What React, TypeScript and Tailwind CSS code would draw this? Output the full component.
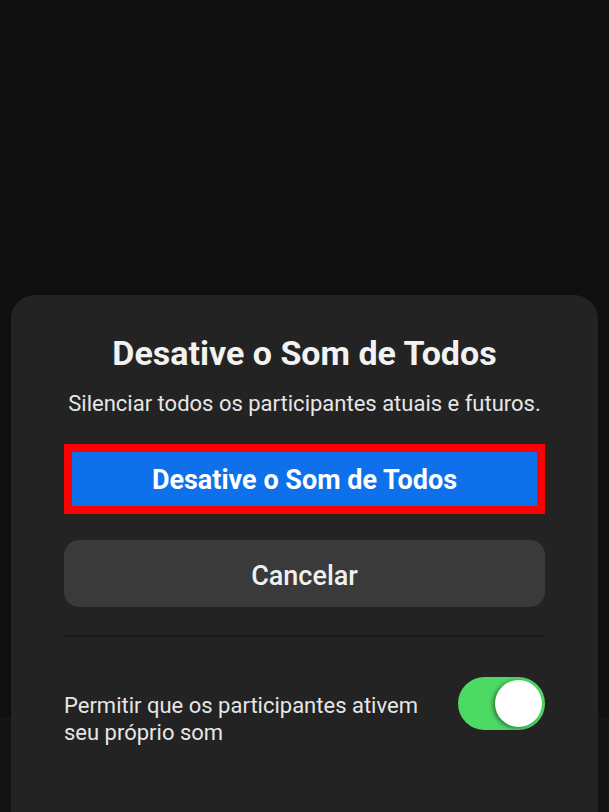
import React from "react";

function Toggle({ on }: { on: boolean }) {
  return (
    <div
      className={`relative h-[53px] w-[87px] shrink-0 rounded-full ${on ? "bg-[#4cd964]" : "bg-[#555]"}`}
    >
      <div className="absolute right-[3px] top-[3px] h-[47px] w-[47px] rounded-full bg-white shadow-[-2px_1px_4px_rgba(0,0,0,0.45)]" />
    </div>
  );
}

export default function App() {
  return (
    <div className="relative h-[812px] w-full overflow-hidden bg-[#0f0f0f] font-['Roboto',sans-serif]">
      {/* dimmed app behind the sheet */}
      <div className="flex h-full flex-col">
        <div className="flex-1" />
        <div className="h-[95px] bg-[#141414]" />
      </div>

      <div className="absolute inset-x-[11px] bottom-0 top-[295px] rounded-t-[24px] bg-[#232323] px-[53px] pt-[40px]">
        <h1 className="text-center text-[34px] font-bold leading-[36px] text-[#f2f2f2]">
          Desative o Som de Todos
        </h1>
        <p className="mt-[19px] text-center text-[22px] leading-[28px] text-[#e6e6e6]">
          Silenciar todos os participantes atuais e futuros.
        </p>

        <div className="mt-[26px] border-[8px] border-[#ff0000]">
          <button className="flex h-[54px] w-full items-center justify-center bg-[#0e71eb] pt-[2px] text-[27px] font-bold text-white">
            Desative o Som de Todos
          </button>
        </div>

        <button className="mt-[26px] flex h-[67px] w-full items-center justify-center rounded-[15px] bg-[#3a3a3a] pt-[5px] text-[27px] font-medium text-[#f0f0f0]">
          Cancelar
        </button>

        <div className="mt-[28px] h-[2px] bg-[#1b1b1b]" />

        <div className="mt-[40px] flex items-start justify-between">
          <p className="mt-[15px] text-[22px] leading-[27px] text-[#e6e6e6]">
            Permitir que os participantes ativem
            <br />
            seu próprio som
          </p>
          <Toggle on />
        </div>
      </div>
    </div>
  );
}
